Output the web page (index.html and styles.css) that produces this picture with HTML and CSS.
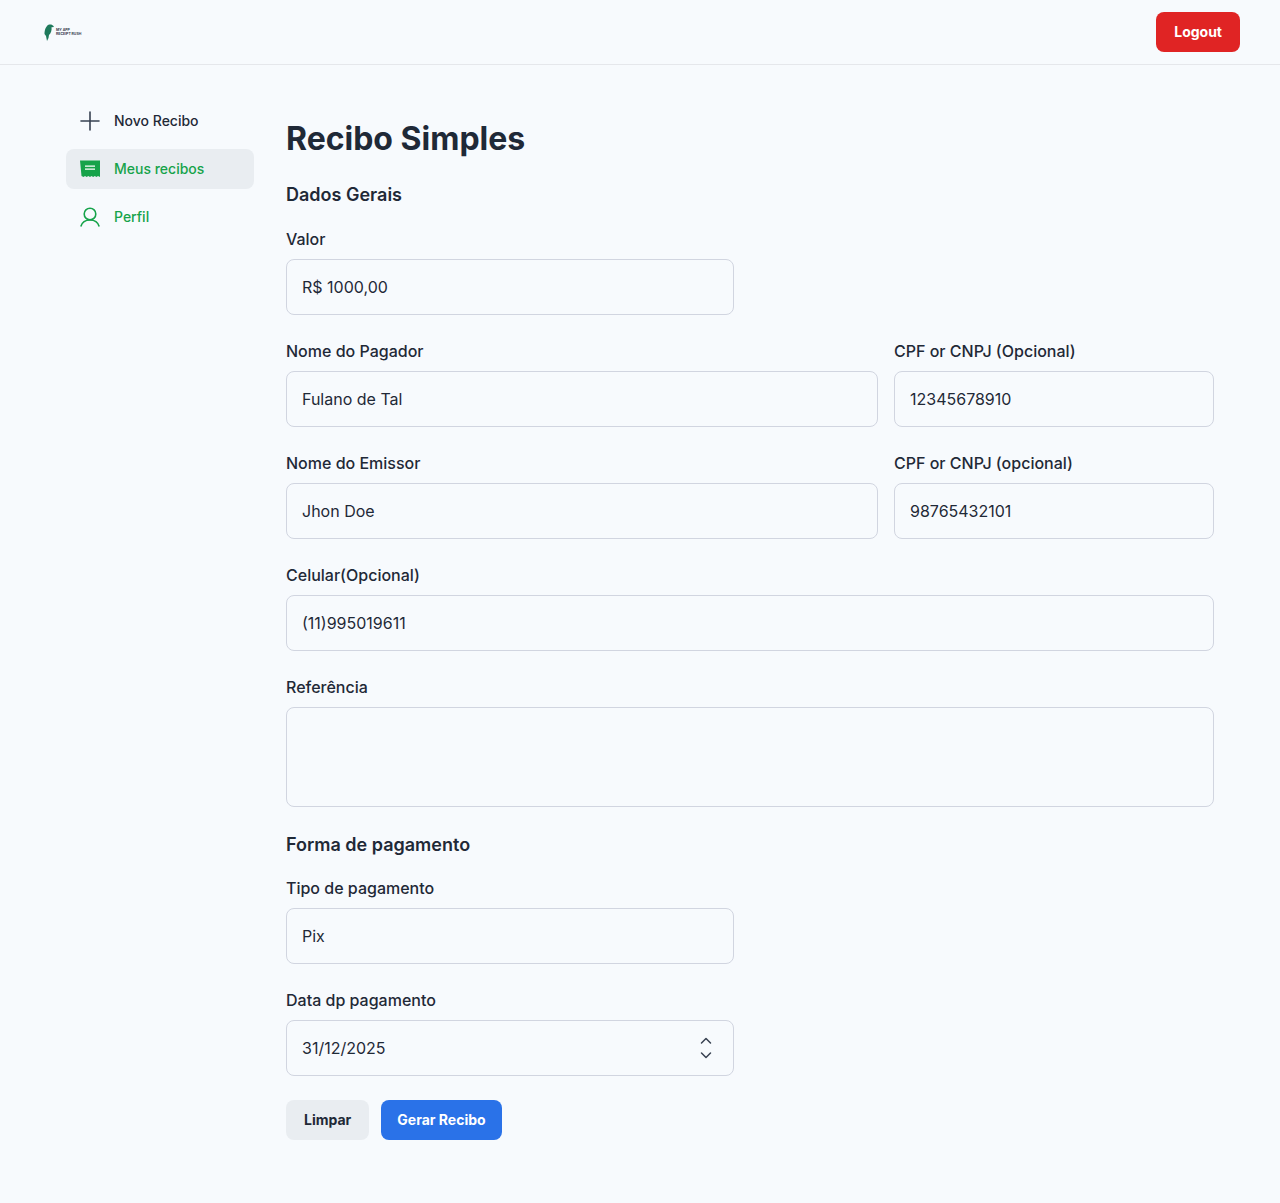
FILE: index.html
```html
<!DOCTYPE html>
<html lang="pt-BR">
<head>
<meta charset="utf-8">
<title>Recibo Simples</title>
<link rel="stylesheet" href="styles.css">
</head>
<body>
<header class="topbar">
  <a class="logo" href="#">
    <svg class="logo-bird" width="10" height="17" viewBox="0 0 10 17"><path d="M3 17 L2 12 L0.5 10 C0.5 6 2 2 4.5 0.8 C6 0 8 0.4 9 1.5 L10 3 L7.5 3.2 C8 6 7 9 5 11 L4.5 14 Z" fill="#1f7a5c"/></svg>
    <span class="logo-text"><span>MY APP</span><span>RECEIPT RUSH</span></span>
  </a>
  <button class="btn btn-danger">Logout</button>
</header>
<div class="layout">
  <nav class="sidebar">
    <a class="nav-item" href="#">
      <svg class="nav-icon" viewBox="0 0 20 20" fill="none"><path d="M10 1v18M1 10h18" stroke="#374151" stroke-width="1.6" stroke-linecap="round"/></svg>
      <span>Novo Recibo</span>
    </a>
    <a class="nav-item nav-green nav-active" href="#">
      <svg class="nav-icon" viewBox="0 0 20 20"><path d="M0 1.5h20v16.500l-2-1-1.500 1-1.700-1-1.600 1-1.700-1-1.500 1-1.700-1-1.600 1-1.700-1-1.500 1-2-1z" fill="#16a34a"/><path d="M5 6.500h10v1.300H5zM5 9.500h10v1.300H5z" fill="#fff"/></svg>
      <span>Meus recibos</span>
    </a>
    <a class="nav-item nav-green" href="#">
      <svg class="nav-icon" viewBox="0 0 20 20" fill="none"><circle cx="10" cy="7" r="5.800" stroke="#16a34a" stroke-width="1.600"/><path d="M0.800 19.500C2 15.500 5.500 13 10 13s8 2.500 9.200 6.500" stroke="#16a34a" stroke-width="1.600"/></svg>
      <span>Perfil</span>
    </a>
  </nav>
  <main class="content">
    <h1>Recibo Simples</h1>
    <h2>Dados Gerais</h2>
    <form class="form">
      <div class="field half"><label>Valor</label><input class="input" value="R$ 1000,00"></div>
      <div class="row">
        <div class="field"><label>Nome do Pagador</label><input class="input" value="Fulano de Tal"></div>
        <div class="field"><label>CPF or CNPJ (Opcional)</label><input class="input" value="12345678910"></div>
      </div>
      <div class="row">
        <div class="field"><label>Nome do Emissor</label><input class="input" value="Jhon Doe"></div>
        <div class="field"><label>CPF or CNPJ (opcional)</label><input class="input" value="98765432101"></div>
      </div>
      <div class="field"><label>Celular(Opcional)</label><input class="input" value="(11)995019611"></div>
      <div class="field"><label>Referência</label><textarea class="input area"></textarea></div>
      <h2 class="section-two">Forma de pagamento</h2>
      <div class="field half tight"><label>Tipo de pagamento</label><input class="input" value="Pix"></div>
      <div class="field half"><label>Data dp pagamento</label>
        <div class="input select"><span>31/12/2025</span>
          <svg width="12" height="22" viewBox="0 0 12 22" fill="none"><path d="M1.500 6 6 1.500 10.500 6M1.500 16 6 20.500 10.500 16" stroke="#374151" stroke-width="1.500" stroke-linecap="round" stroke-linejoin="round"/></svg>
        </div>
      </div>
      <div class="actions">
        <button type="button" class="btn btn-light">Limpar</button>
        <button type="button" class="btn btn-primary">Gerar Recibo</button>
      </div>
    </form>
  </main>
</div>
</body>
</html>
```
FILE: styles.css
```css
* { box-sizing: border-box; }
html, body { margin: 0; }
body {
  background: #f7fafd;
  color: #1f2937;
  font-family: Inter, "Liberation Sans", sans-serif;
  font-size: 16px;
  line-height: 24px;
  height: 1203px;
}
.topbar {
  height: 65px;
  border-bottom: 1px solid #e5e7eb;
  padding: 0 40px 0 44px;
  display: flex;
  align-items: center;
  justify-content: space-between;
}
.logo { display: flex; align-items: center; gap: 2px; text-decoration: none; }
.logo-bird { display: block; }
.logo-text {
  display: flex;
  flex-direction: column;
  font-size: 3.500px;
  line-height: 4px;
  font-weight: 700;
  color: #374151;
  white-space: nowrap;
}
.btn {
  height: 40px;
  border: 0;
  border-radius: 8px;
  padding: 0 18px;
  font-family: inherit;
  font-size: 14px;
  font-weight: 700;
  line-height: 20px;
}
.btn-danger { background: #e02424; color: #fff; }
.btn-light { background: #e9edf1; color: #1f2937; }
.btn-primary { background: #2a72e8; color: #fff; padding: 0 16px; }
.layout { display: flex; padding: 36px 66px 0; gap: 32px; }
.sidebar { width: 188px; flex: none; display: flex; flex-direction: column; gap: 8px; }
.nav-item {
  height: 40px;
  border-radius: 8px;
  padding: 0 14px;
  display: flex;
  align-items: center;
  gap: 14px;
  font-size: 14px;
  font-weight: 500;
  color: #1f2937;
  text-decoration: none;
}
.nav-icon { width: 20px; height: 20px; flex: none; }
.nav-green { color: #16a34a; }
.nav-active { background: #e9edf1; }
.content { width: 928px; flex: none; padding-top: 18px; }
h1 { margin: 0 0 22px; font-size: 32px; line-height: 40px; font-weight: 700; color: #1f2937; }
h2 { margin: 0 0 18px; font-size: 18px; line-height: 28px; font-weight: 600; color: #1f2937; }
.form { display: flex; flex-direction: column; gap: 24px; }
.field { display: flex; flex-direction: column; gap: 8px; min-width: 0; }
.half { width: 448px; }
.row { display: grid; grid-template-columns: 1fr 320px; gap: 16px; }
label { font-size: 16px; font-weight: 500; line-height: 24px; color: #1f2937; }
.input {
  width: 100%;
  height: 56px;
  display: block;
  background: transparent;
  border: 1px solid #d1d5e0;
  border-radius: 8px;
  padding: 0 15px;
  font-family: inherit;
  font-size: 16px;
  color: #1f2937;
  outline: none;
}
.area { height: 100px; resize: none; }
.select { display: flex; align-items: center; justify-content: space-between; padding-right: 21px; }
.section-two { margin: 0; padding-top: 0; }
.tight { margin-top: -7px; }
.actions { display: flex; gap: 12px; }
```
